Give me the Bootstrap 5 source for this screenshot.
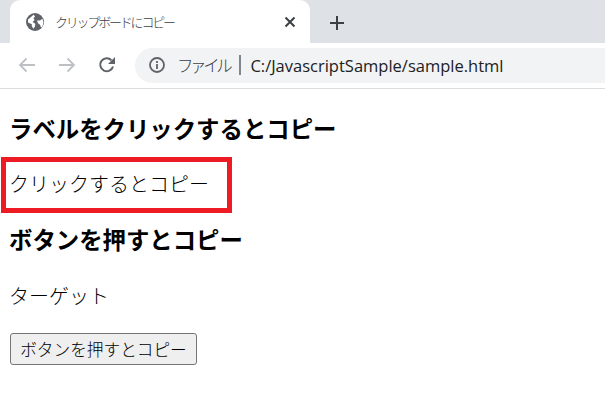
<!DOCTYPE html>
<html lang="ja">
<head>
<meta charset="utf-8">
<title>クリップボードにコピー</title>
<link href="https://cdn.jsdelivr.net/npm/bootstrap@5.3.0/dist/css/bootstrap.min.css" rel="stylesheet">
<style>
html,body{height:419px;overflow:hidden;background:#fff}
body{font-family:"Liberation Sans","Noto Sans CJK JP",sans-serif;color:#000;position:relative}
.strip{height:43px;background:#dee1e6;padding-left:10px}
.tabx{width:300px;height:43px;background:#fff;border-radius:10px 10px 0 0;padding:0 14px 0 16px;color:#5f6368}
.tabt{font:300 13px "Noto Sans CJK JP",sans-serif;color:#3c4043;margin-left:11px;letter-spacing:-2.2px}
.plus{margin-left:19px}
.tools{height:46px;border-bottom:1px solid #dadce0;padding:0 0 1px 18px}
.navic{margin-right:22px;flex:none}
.omni{height:35px;margin-left:-3px;background:#f1f3f4;border-radius:18px 0 0 18px;padding-left:14px}
.omni .lab{font:300 16.500px "Noto Sans CJK JP",sans-serif;color:#3c4043;margin-left:12px;letter-spacing:-3.400px}
.sep{width:2px;height:20px;background:#80868b;margin:0 11px 0 10px}
.url{font:16.500px "Open Sans","Liberation Sans",sans-serif;color:#202124;margin-left:-2px}
.pagearea{padding:0 9px}
.pagearea h3,.pagearea p{font-family:"Noto Sans CJK JP",sans-serif;margin:0}
.headx{font-size:23.4px;font-weight:700;line-height:32px;color:#000}
.bodyx{font-size:20px;line-height:32px;font-weight:300}
.h1x{margin-top:23px!important}
.p1x{margin-top:24px!important}
.h2x{margin-top:23px!important}
.p2x{margin-top:25px!important}
.btnx{margin-top:21px;margin-left:1px;display:block;width:187px;height:32px;padding:0;background:#efefef;border:1px solid #767676;border-radius:3px;font:300 16.67px/1 "Noto Sans CJK JP",sans-serif;color:#000}
.redbox{position:absolute;left:1px;top:157px;width:231px;height:56px;border:5px solid #ed1c24}
</style>
</head>
<body>
<div class="strip d-flex align-items-start">
  <div class="tabx d-flex align-items-center">
    <svg width="18" height="18" viewBox="0 0 18 18" class="flex-shrink-0"><circle cx="9" cy="9" r="9" fill="#5f6368"/><path d="M2 6.5 5 4l2.5-2.2 1.6 1.4L7.5 5.2 8.6 7 6.6 9l2.7 1.8-.3 2.6-1.6 2.4-1.7-2.7.2-1.8L2 9.5Z" fill="#fff"/><path d="M11 7.5h3l2.4-1.8 1 3.3-.7 3.7-1.6 2-1.1-3-2-1.4Z" fill="#fff"/></svg>
    <span class="tabt flex-grow-1">クリップボードにコピー</span>
    <svg width="12" height="12" viewBox="0 0 12 12"><path d="M1.5 1.5l9 9M10.5 1.5l-9 9" stroke="#3c4043" stroke-width="2" fill="none"/></svg>
  </div>
  <svg class="plus mt-3" width="16" height="14" viewBox="0 0 16 14"><path d="M8 0v14M1 7h14" stroke="#3c4043" stroke-width="2" fill="none"/></svg>
</div>
<div class="tools d-flex align-items-center">
  <svg class="navic" width="18" height="16" viewBox="0 0 18 16"><path d="M17 8H2M8.500 1.500 2 8l6.500 6.500" stroke="#bdc1c6" stroke-width="1.800" fill="none"/></svg>
  <svg class="navic" width="18" height="16" viewBox="0 0 18 16"><path d="M1 8h15M9.500 1.500 16 8l-6.500 6.500" stroke="#bdc1c6" stroke-width="1.800" fill="none"/></svg>
  <svg class="navic" width="18" height="18" viewBox="0 0 18 18"><path d="M15 10.500A6.500 6.500 0 1 1 13.400 4.200" stroke="#5f6368" stroke-width="2" fill="none"/><path d="M17 1v7h-7Z" fill="#5f6368"/></svg>
  <div class="omni d-flex align-items-center flex-grow-1">
    <svg width="16" height="16" viewBox="0 0 16 16" class="flex-shrink-0"><circle cx="8" cy="8" r="7" stroke="#5f6368" stroke-width="1.800" fill="none"/><path d="M8 7v5M8 4v2" stroke="#5f6368" stroke-width="1.800"/></svg>
    <span class="lab">ファイル</span><span class="sep"></span><span class="url">C:/JavascriptSample/sample.html</span>
  </div>
</div>
<main class="pagearea">
  <h3 class="headx h1x">ラベルをクリックするとコピー</h3>
  <p class="bodyx p1x">クリックするとコピー</p>
  <h3 class="headx h2x">ボタンを押すとコピー</h3>
  <p class="bodyx p2x">ターゲット</p>
  <button type="button" class="btnx">ボタンを押すとコピー</button>
</main>
<div class="redbox"></div>
<script src="https://cdn.jsdelivr.net/npm/bootstrap@5.3.0/dist/js/bootstrap.bundle.min.js"></script>
</body>
</html>
